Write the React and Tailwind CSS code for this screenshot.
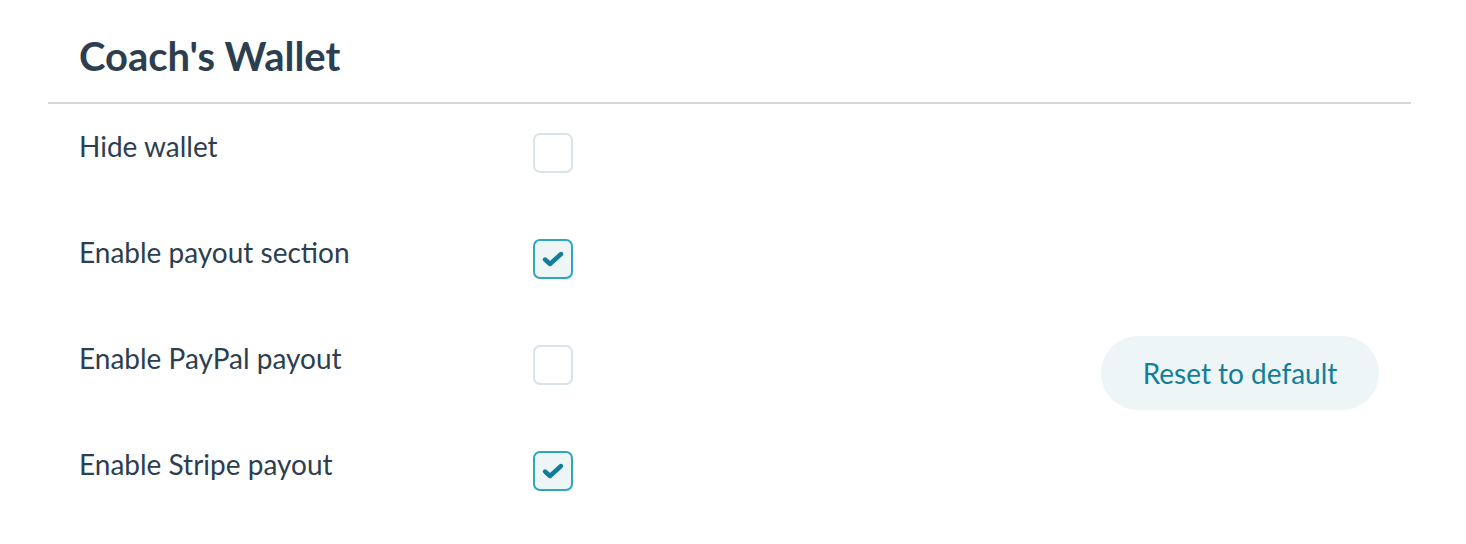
const ROWS = [
  { label: "Hide wallet", checked: false },
  { label: "Enable payout section", checked: true },
  { label: "Enable PayPal payout", checked: false, reset: true },
  { label: "Enable Stripe payout", checked: true },
];

function Checkbox({ checked }) {
  return (
    <div
      className={`w-10 h-10 rounded-[7px] border-2 flex items-center justify-center ${
        checked ? "border-[#2ca7bf] bg-[#edf5f7]" : "border-[#d9e4ea] bg-white"
      }`}
    >
      {checked && (
        <svg width="24" height="18" viewBox="0 0 24 18" fill="none">
          <path
            d="M4 9.5 L9 14 L20 4"
            stroke="#107e99"
            strokeWidth="4.4"
            strokeLinecap="round"
            strokeLinejoin="round"
          />
        </svg>
      )}
    </div>
  );
}

export default function App() {
  return (
    <div
      className="w-full h-[544px] bg-white text-[#2c3e50]"
      style={{ fontFamily: "Lato, 'Open Sans', sans-serif" }}
    >
      <div className="ml-[48px] mr-[55px]">
        {/* Header */}
        <div className="pl-[31px] pt-[30px] pb-[20px] border-b-2 border-[#d8d8d8]">
          <h1 className="text-[40px] leading-[52px] font-bold">Coach's Wallet</h1>
        </div>

        {/* Settings */}
        <div className="pl-[31px] pr-[32px] pt-[29px]">
          {ROWS.map((row) => (
            <div key={row.label} className="flex items-start h-[106px]">
              <span className="w-[454px] text-[28px] leading-[32px] -mt-[3px]">
                {row.label}
              </span>
              <Checkbox checked={row.checked} />
              {row.reset && (
                <div className="flex-1 flex justify-end">
                  <button className="mt-[-9px] h-[74px] w-[278px] rounded-full bg-[#edf5f7] text-[#117f99] text-[28px]">
                    Reset to default
                  </button>
                </div>
              )}
            </div>
          ))}
        </div>
      </div>
    </div>
  );
}
